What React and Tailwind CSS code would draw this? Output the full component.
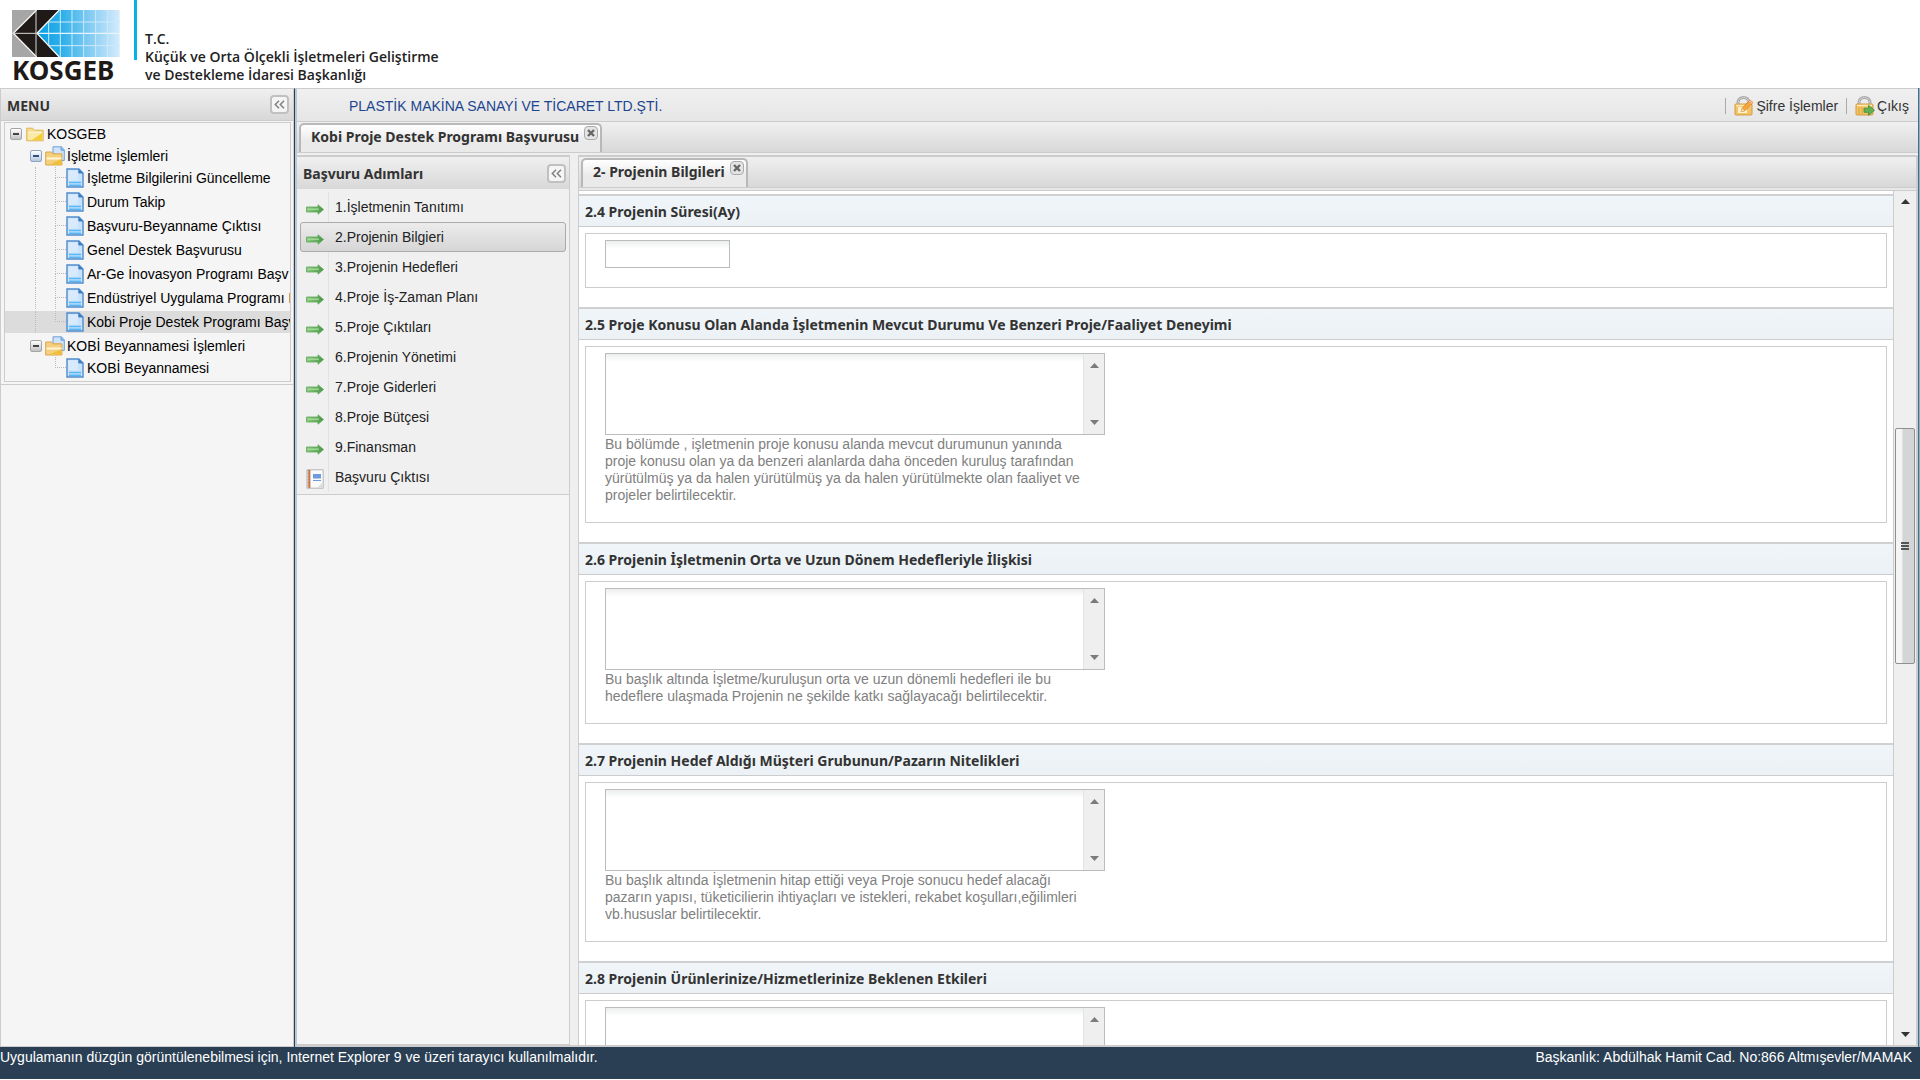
import { useState } from 'react';
import clsx from 'clsx';

const TREE = [
  { label: 'KOSGEB', level: 0, type: 'root', short: true },
  { label: 'İşletme İşlemleri', level: 1, type: 'folder', short: true },
  { label: 'İşletme Bilgilerini Güncelleme', level: 2, type: 'leaf' },
  { label: 'Durum Takip', level: 2, type: 'leaf' },
  { label: 'Başvuru-Beyanname Çıktısı', level: 2, type: 'leaf' },
  { label: 'Genel Destek Başvurusu', level: 2, type: 'leaf' },
  { label: 'Ar-Ge İnovasyon Programı Başv', level: 2, type: 'leaf' },
  { label: 'Endüstriyel Uygulama Programı B', level: 2, type: 'leaf' },
  { label: 'Kobi Proje Destek Programı Başv', level: 2, type: 'leaf', selected: true, last: true },
  { label: 'KOBİ Beyannamesi İşlemleri', level: 1, type: 'folder', short: true },
  { label: 'KOBİ Beyannamesi', level: 2, type: 'leaf', last: true, lastBranch: true },
];

const STEPS = [
  '1.İşletmenin Tanıtımı',
  '2.Projenin Bilgieri',
  '3.Projenin Hedefleri',
  '4.Proje İş-Zaman Planı',
  '5.Proje Çıktıları',
  '6.Projenin Yönetimi',
  '7.Proje Giderleri',
  '8.Proje Bütçesi',
  '9.Finansman',
  'Başvuru Çıktısı',
];

const SECTIONS = [
  { id: 'sure', title: '2.4 Projenin Süresi(Ay)', kind: 'input' },
  {
    id: 'deneyim',
    title: '2.5 Proje Konusu Olan Alanda İşletmenin Mevcut Durumu Ve Benzeri Proje/Faaliyet Deneyimi',
    help: [
      'Bu bölümde , işletmenin proje konusu alanda mevcut durumunun yanında',
      'proje konusu olan ya da benzeri alanlarda daha önceden kuruluş tarafından',
      'yürütülmüş ya da halen yürütülmüş ya da halen yürütülmekte olan faaliyet ve',
      'projeler belirtilecektir.',
    ],
  },
  {
    id: 'iliski',
    title: '2.6 Projenin İşletmenin Orta ve Uzun Dönem Hedefleriyle İlişkisi',
    help: [
      'Bu başlık altında İşletme/kuruluşun orta ve uzun dönemli hedefleri ile bu',
      'hedeflere ulaşmada Projenin ne şekilde katkı sağlayacağı belirtilecektir.',
    ],
  },
  {
    id: 'musteri',
    title: '2.7 Projenin Hedef Aldığı Müşteri Grubunun/Pazarın Nitelikleri',
    help: [
      'Bu başlık altında İşletmenin hitap ettiği veya Proje sonucu hedef alacağı',
      'pazarın yapısı, tüketicilierin ihtiyaçları ve istekleri, rekabet koşulları,eğilimleri',
      'vb.hususlar belirtilecektir.',
    ],
  },
  { id: 'etki', title: '2.8 Projenin Ürünlerinize/Hizmetlerinize Beklenen Etkileri', help: [] },
];

function Logo() {
  return (
    <svg viewBox="38 30 324 141" className="w-[108px] h-[47px]" aria-hidden="true">
      <defs>
        <linearGradient id="logoBlue" x1="0" x2="1">
          <stop offset="0" stopColor="#0a9fe4" />
          <stop offset="0.3" stopColor="#2fb0ea" />
          <stop offset="0.65" stopColor="#86cdf3" />
          <stop offset="1" stopColor="#d5ebfb" />
        </linearGradient>
      </defs>
      <rect x="38" y="30" width="72" height="141" fill="#a6a6a6" />
      <path d="M115 100 178 30H361V171H178Z" fill="url(#logoBlue)" />
      <path d="M42 100 110 32V30H178L113 100 178 171H110V168Z" fill="#1f1a17" />
      <path d="M42 100 112 30M42 100 112 171M113 100 180 30M113 100 180 171" stroke="#f4f4f4" strokeWidth="4" fill="none" />
      <path d="M38 100H113M110 30V171" stroke="#d8d8d8" strokeWidth="3" />
      <path d="M113 100H361" stroke="#e6f5fd" strokeWidth="4" />
      <path
        d="M148 66V136M183 30V171M218 30V171M253 30V171M289 30V171M325 30V171M148 66H361M148 137H361"
        stroke="#cdeafa"
        strokeWidth="3"
      />
    </svg>
  );
}

function DocIcon() {
  return (
    <svg width="18" height="20" viewBox="0 0 18 20" className="shrink-0" aria-hidden="true">
      <path d="M1 1h11.8L17 5v14H1z" fill="#c9e2fb" stroke="#4f8ccb" strokeWidth="1.4" />
      <path d="M2.4 2.4h9.4v10H2.4z" fill="#d9eafd" />
      <path d="M12.8 1.4V5h3.8z" fill="#3f7fc4" stroke="#3f7fc4" />
      <path d="M3 14.6h12M3 17.2h12" stroke="#55b8f5" strokeWidth="1.5" />
    </svg>
  );
}

function RootIcon() {
  return (
    <svg width="18" height="15" viewBox="0 0 18 15" className="shrink-0" aria-hidden="true">
      <path d="M.7 13.8V1.2h6l1.5 2h9v10.6z" fill="#f6dd8c" stroke="#e0b55a" />
      <path d="M2 13V5.5h14V13z" fill="#fbe9a8" />
      <path d="M6 13 16 6v7z" fill="#f3cf35" />
      <path d="M2.5 5.2h13" stroke="#fffbe6" />
    </svg>
  );
}

function FolderIcon() {
  return (
    <svg width="20" height="20" viewBox="0 0 20 20" className="shrink-0" aria-hidden="true">
      <path d="M8 .8h8.5L19.3 4v10.5H8z" fill="#cfe3fa" stroke="#6c9fdc" />
      <path d="M16 .8v3.4h3.3" fill="#8fb9ea" stroke="#6c9fdc" />
      <path d="M.7 19V6h6l1.2 1.8h9V19z" fill="#f4cf7c" stroke="#dfa54a" />
      <path d="M1.5 12.5h15" stroke="#fff6d8" strokeWidth="2" />
      <path d="M5 18.5 16.4 13v5.5z" fill="#f0bf3a" />
    </svg>
  );
}

function Toggle({ blue }) {
  return (
    <span
      className={clsx(
        'flex size-3 shrink-0 items-center justify-center rounded-[2px] border bg-gradient-to-b from-white',
        blue ? 'border-[#8fa5c2] to-[#b4c8e2]' : 'border-[#a5a5a5] to-[#c2c2c2]'
      )}
    >
      <span className={clsx('h-[2px] w-1.5', blue ? 'bg-[#2f4f7f]' : 'bg-[#444]')} />
    </span>
  );
}

function ArrowIcon() {
  return (
    <svg width="18" height="11" viewBox="0 0 18 11" className="shrink-0" aria-hidden="true">
      <defs>
        <linearGradient id="arrowGreen" x1="0" x2="1">
          <stop offset="0" stopColor="#8ccf7f" />
          <stop offset="1" stopColor="#4a9648" />
        </linearGradient>
      </defs>
      <path d="M.5 3H12V.8l5.5 4.7L12 10.2V8H.5z" fill="url(#arrowGreen)" stroke="#5fa45c" strokeWidth=".8" />
      <path d="M1.8 5.2h11" stroke="#a5d99a" strokeWidth="1.4" />
    </svg>
  );
}

function NotebookIcon() {
  return (
    <svg width="18" height="20" viewBox="0 0 18 20" className="shrink-0" aria-hidden="true">
      <path d="M1 .8h16.2v18.4H1z" fill="#fafafa" stroke="#b5b5b5" />
      <path d="M1.8 1h2.6v18H1.8z" fill="#c8764a" />
      <path d="M0 3h3M0 6h3M0 9h3M0 12h3M0 15h3M0 18h3" stroke="#ccc" />
      <path d="M7 5h8v4.5H7z" fill="#6e9be0" />
      <path d="M7 11.5h8" stroke="#6e9be0" />
      <path d="M11 19l6-6v6z" fill="#ddd" />
    </svg>
  );
}

function LockIcon({ variant }) {
  return (
    <svg width="20" height="20" viewBox="0 0 20 20" className="shrink-0" aria-hidden="true">
      <path d="M4 9V6.5a5.5 5 0 0 1 11 0V9" fill="none" stroke="#a8a8a8" strokeWidth="3" />
      <path d="M4 9V6.5a5.5 5 0 0 1 11 0V9" fill="none" stroke="#d5d5d5" />
      <rect x="1" y="8" width="17" height="11" rx="1" fill="#f3c463" stroke="#d29a48" />
      <path d="M2 9.5h15" stroke="#fdeab5" strokeWidth="1.4" />
      {variant === 'edit' ? (
        <>
          <path d="M4 11h9v6H4z" fill="#fff3cf" />
          <path d="M7 15.5 8 12.5 16 4l3 2.5-8.5 8.5z" fill="#f9a63a" stroke="#c9792b" strokeWidth=".8" />
          <path d="M16 4l3 2.5-1.3 1.4-3-2.5z" fill="#f3b7a0" />
          <path d="M7 15.5 8 12.5l2.4 2.4z" fill="#f7e3c4" />
        </>
      ) : (
        <>
          <path d="M4 11v7M7 11v7" stroke="#dba23c" />
          <path d="M9 12.2h4.5V9.3l6 5-6 5v-3H9z" fill="#63b356" stroke="#3d8a3a" strokeWidth=".8" />
        </>
      )}
    </svg>
  );
}

function CollapseButton({ label }) {
  return (
    <button
      type="button"
      aria-label={label}
      className="flex size-[19px] items-center justify-center rounded-[4px] border-2 border-[#c0c0c0] bg-[#f5f5f5]"
    >
      <svg width="11" height="9" viewBox="0 0 11 9" fill="none" stroke="#808080" strokeWidth="1.5" aria-hidden="true">
        <path d="M5 .8 1.3 4.5 5 8.2M10 .8 6.3 4.5 10 8.2" />
      </svg>
    </button>
  );
}

function Tab({ label }) {
  return (
    <div className="flex h-full items-start rounded-t-[5px] border-x-2 border-t-2 border-[#b8b8b8] bg-gradient-to-b from-white to-[#eaeaea] to-60% pr-0.5 pl-2.5">
      <button type="button" className="text-sm leading-6 font-bold whitespace-nowrap">
        {label}
      </button>
      <button
        type="button"
        aria-label={`${label} kapat`}
        className="mt-px ml-[5px] flex size-[14px] items-center justify-center rounded-[4px] border border-[#aaa] bg-[#e4e4e4]"
      >
        <svg width="8" height="8" viewBox="0 0 8 8" stroke="#666" strokeWidth="2.4" aria-hidden="true">
          <path d="M1 1l6 6M7 1 1 7" />
        </svg>
      </button>
    </div>
  );
}

function TreeRow({ item }) {
  const { level, type } = item;
  return (
    <li className={clsx('flex flex-col', item.short ? 'h-[22px]' : 'h-6')}>
      <a
        href="#"
        className={clsx('flex h-[22px] items-center whitespace-nowrap', item.selected && 'bg-[#dcdcdc]')}
      >
        {level === 0 && <span className="w-[5px] shrink-0" />}
        {level === 1 && <span className="w-[25px] shrink-0" />}
        {level === 2 && (
          <>
            <span
              className={clsx(
                'ml-[30px] h-full w-5 shrink-0 border-l border-dotted',
                item.lastBranch ? 'border-transparent' : 'border-[#bbb]'
              )}
            />
            <span className="flex h-full w-[11px] shrink-0 flex-col">
              <span className="h-[11px] border-b border-l border-dotted border-[#bbb]" />
              <span className={clsx('flex-1 border-l border-dotted', item.last ? 'border-transparent' : 'border-[#bbb]')} />
            </span>
          </>
        )}
        {type !== 'leaf' && <Toggle blue={item.label.startsWith('İş')} />}
        {type === 'root' && <span className="mr-[3px] ml-1 flex"><RootIcon /></span>}
        {type === 'folder' && <span className="mr-0.5 ml-[3px] flex"><FolderIcon /></span>}
        {type === 'leaf' && <span className="mr-[3px] flex"><DocIcon /></span>}
        <span className="text-sm leading-5">{item.label}</span>
      </a>
    </li>
  );
}

function Triangle({ down, dark }) {
  return (
    <svg width="9" height="5" viewBox="0 0 9 5" fill={dark ? '#333' : '#7b7b7b'} aria-hidden="true">
      <path d={down ? 'M0 0h9L4.5 5z' : 'M0 5h9L4.5 0z'} />
    </svg>
  );
}

function Section({ section }) {
  const isInput = section.kind === 'input';
  return (
    <section className="mb-[19px] shrink-0">
      <h2 className="border-t-2 border-b border-t-[#d0d0d0] border-b-[#ccc] bg-gradient-to-b from-[#f0f5fa] to-[#ebf1f5] px-1.5 pt-1.5 pb-1 text-sm leading-5 font-bold text-[#333]">
        <label htmlFor={section.id}>{section.title}</label>
      </h2>
      <div className="mx-1.5 mt-1.5 border border-[#ccc] px-[19px] pt-1.5 pb-[18px]">
        {isInput ? (
          <input
            id={section.id}
            type="text"
            className="mb-px block h-7 w-[125px] border border-[#bcbcbc] bg-gradient-to-b from-[#eceeee] to-white to-30% px-1 text-sm"
          />
        ) : (
          <div className="w-[500px]">
            <div className="flex h-[82px] border border-[#bcbcbc]">
              <textarea
                id={section.id}
                className="min-w-0 flex-1 resize-none overflow-hidden bg-gradient-to-b from-[#eceeee] to-white to-10% px-1 text-sm"
              />
              <div className="flex w-[21px] flex-col items-center justify-between border-l border-[#e4e4e4] bg-[#efefef] py-[9px]">
                <Triangle />
                <Triangle down />
              </div>
            </div>
            <p className="pt-px text-sm leading-[17px] whitespace-nowrap text-[#808080]">
              {section.help.map((line) => (
                <span key={line} className="block">{line}</span>
              ))}
            </p>
          </div>
        )}
      </div>
    </section>
  );
}

export default function App() {
  const [active, setActive] = useState(1);

  return (
    <div className="flex h-screen flex-col overflow-hidden bg-white font-['Liberation_Sans',sans-serif] text-black">
      <header className="flex h-[88px] shrink-0">
        <div className="ml-3 w-[122px] pt-2.5">
          <Logo />
          <div className="font-['Noto_Sans',sans-serif] text-[26px] leading-[26px] font-bold text-[#1f1a17]">KOSGEB</div>
        </div>
        <div className="h-[60px] w-[3px] bg-[#00b2e8]" />
        <p className="ml-2 pt-[30px] font-['Open_Sans',sans-serif] text-sm leading-[18px] font-semibold text-[#222]">
          T.C.
          <br />
          Küçük ve Orta Ölçekli İşletmeleri Geliştirme
          <br />
          ve Destekleme İdaresi Başkanlığı
        </p>
      </header>

      <div className="flex min-h-0 flex-1">
        <nav className="flex w-[294px] shrink-0 flex-col border border-[#ccc] bg-[#f5f5f5]">
          <div className="flex h-8 shrink-0 items-center justify-between border-b border-[#ccc] bg-gradient-to-b from-[#f0f0f0] to-[#d8d8d8] pr-1 pl-1.5">
            <h1 className="pt-0.5 font-['Noto_Sans',sans-serif] text-sm font-bold text-[#333]">MENU</h1>
            <CollapseButton label="Menüyü daralt" />
          </div>
          <div className="border-b border-[#ccc] pt-px pr-0.5 pb-0.5 pl-[3px]">
            <ul className="overflow-hidden border border-[#ccc]">
              {TREE.map((item) => (
                <TreeRow key={item.label} item={item} />
              ))}
            </ul>
          </div>
        </nav>
        <div className="w-[3px] shrink-0 border-t border-r-2 border-l border-t-[#ccc] border-r-[#b9c8d4] border-l-[#2a3f54]" />

        <div className="flex min-w-0 flex-1 flex-col border-b-2 border-[#ccc] bg-[#efefef]">
          <div className="flex h-[34px] shrink-0 items-center border-y border-[#ccc] bg-gradient-to-b from-[#f0f0f0] to-[#e6e6e6] pt-0.5 pr-[9px] pl-[52px] text-sm">
            <span className="text-[#1c4590]">PLASTİK MAKİNA SANAYİ VE TİCARET LTD.ŞTİ.</span>
            <div className="ml-auto flex items-center gap-2 text-[#333]">
              <span className="h-4 w-px bg-[#aaa]" />
              <a href="#" className="flex items-center gap-0.5">
                <LockIcon variant="edit" />
                Şifre İşlemler
              </a>
              <span className="h-4 w-px bg-[#aaa]" />
              <a href="#" className="flex items-center gap-0.5">
                <LockIcon variant="exit" />
                Çıkış
              </a>
            </div>
          </div>
          <div className="flex h-[31px] shrink-0 border-b border-[#ccc] bg-gradient-to-b from-[#f0f0f0] to-[#d8d8d8] pt-px pl-0.5 font-['Noto_Sans',sans-serif] text-[#333]">
            <Tab label="Kobi Proje Destek Programı Başvurusu" />
          </div>

          <div className="flex min-h-0 flex-1 pt-0.5">
            <aside className="flex w-[273px] shrink-0 flex-col border border-t-2 border-l-0 border-[#ccc] bg-[#f5f5f5]">
              <div className="flex h-8 shrink-0 items-center justify-between bg-gradient-to-b from-[#f0f0f0] to-[#d8d8d8] pr-[3px] pl-1.5">
                <h2 className="pt-0.5 font-['Noto_Sans',sans-serif] text-sm font-bold text-[#333]">Başvuru Adımları</h2>
                <CollapseButton label="Adımları daralt" />
              </div>
              <ul className="border-b border-[#ccc] bg-[#f0f0f0] px-[3px] pt-[3px] pb-0.5">
                {STEPS.map((step, i) => (
                  <li key={step} className="h-[30px]">
                    <a
                      href="#"
                      onClick={() => setActive(i)}
                      className={clsx(
                        'flex h-[30px] items-center rounded-[3px] border pl-[5px] text-sm text-[#222]',
                        i === active
                          ? 'border-[#aaa] bg-gradient-to-b from-[#ececec] to-[#d6d6d6]'
                          : 'border-transparent'
                      )}
                    >
                      <span
                        className={clsx(
                          'mr-1.5 flex h-[30px] w-[23px] shrink-0 items-center border-r pt-1',
                          i === active ? 'border-transparent' : 'border-[#e2e2e2]'
                        )}
                      >
                        {i === STEPS.length - 1 ? <NotebookIcon /> : <ArrowIcon />}
                      </span>
                      {step}
                    </a>
                  </li>
                ))}
              </ul>
            </aside>

            <main className="ml-2 flex min-w-0 flex-1 flex-col border-t-2 border-r-2 border-l border-[#ccc] bg-white">
              <div className="flex h-[31px] shrink-0 border-b border-[#ccc] bg-gradient-to-b from-[#f0f0f0] to-[#d8d8d8] pt-px pl-0.5 font-['Noto_Sans',sans-serif] text-[#333]">
                <Tab label="2- Projenin Bilgileri" />
              </div>
              <div className="h-[3px] shrink-0 border-b border-[#ccc] bg-[#e8e8e8]" />
              <div className="flex min-h-0 flex-1">
                <form className="flex min-w-0 flex-1 flex-col overflow-hidden border-r border-[#ccc] pt-[3px] [&_h2]:font-['Noto_Sans',sans-serif]">
                  {SECTIONS.map((section) => (
                    <Section key={section.id} section={section} />
                  ))}
                </form>
                <div className="flex w-[22px] shrink-0 flex-col items-center bg-[#efefef] py-2">
                  <Triangle dark />
                  <div className="basis-[224px]" />
                  <div className="flex h-[236px] w-5 flex-col items-center justify-center gap-px rounded-[2px] border border-[#8f8f8f] bg-gradient-to-r from-[#f5f5f5] from-30% to-[#d3d5d7] to-40%">
                    <span className="h-0.5 w-2 bg-[#555]" />
                    <span className="h-0.5 w-2 bg-[#555]" />
                    <span className="h-0.5 w-2 bg-[#555]" />
                  </div>
                  <div className="flex-1" />
                  <Triangle down dark />
                </div>
              </div>
            </main>
          </div>
        </div>
        <div className="w-0.5 shrink-0 border-r border-l border-r-[#8fb0c4] border-l-[#44708c]" />
      </div>

      <footer className="mb-px flex h-8 shrink-0 justify-between bg-[#2a3f54] pr-2 text-sm leading-5 text-white">
        <span>Uygulamanın düzgün görüntülenebilmesi için, Internet Explorer 9 ve üzeri tarayıcı kullanılmalıdır.</span>
        <span>Başkanlık: Abdülhak Hamit Cad. No:866 Altmışevler/MAMAK</span>
      </footer>
    </div>
  );
}
